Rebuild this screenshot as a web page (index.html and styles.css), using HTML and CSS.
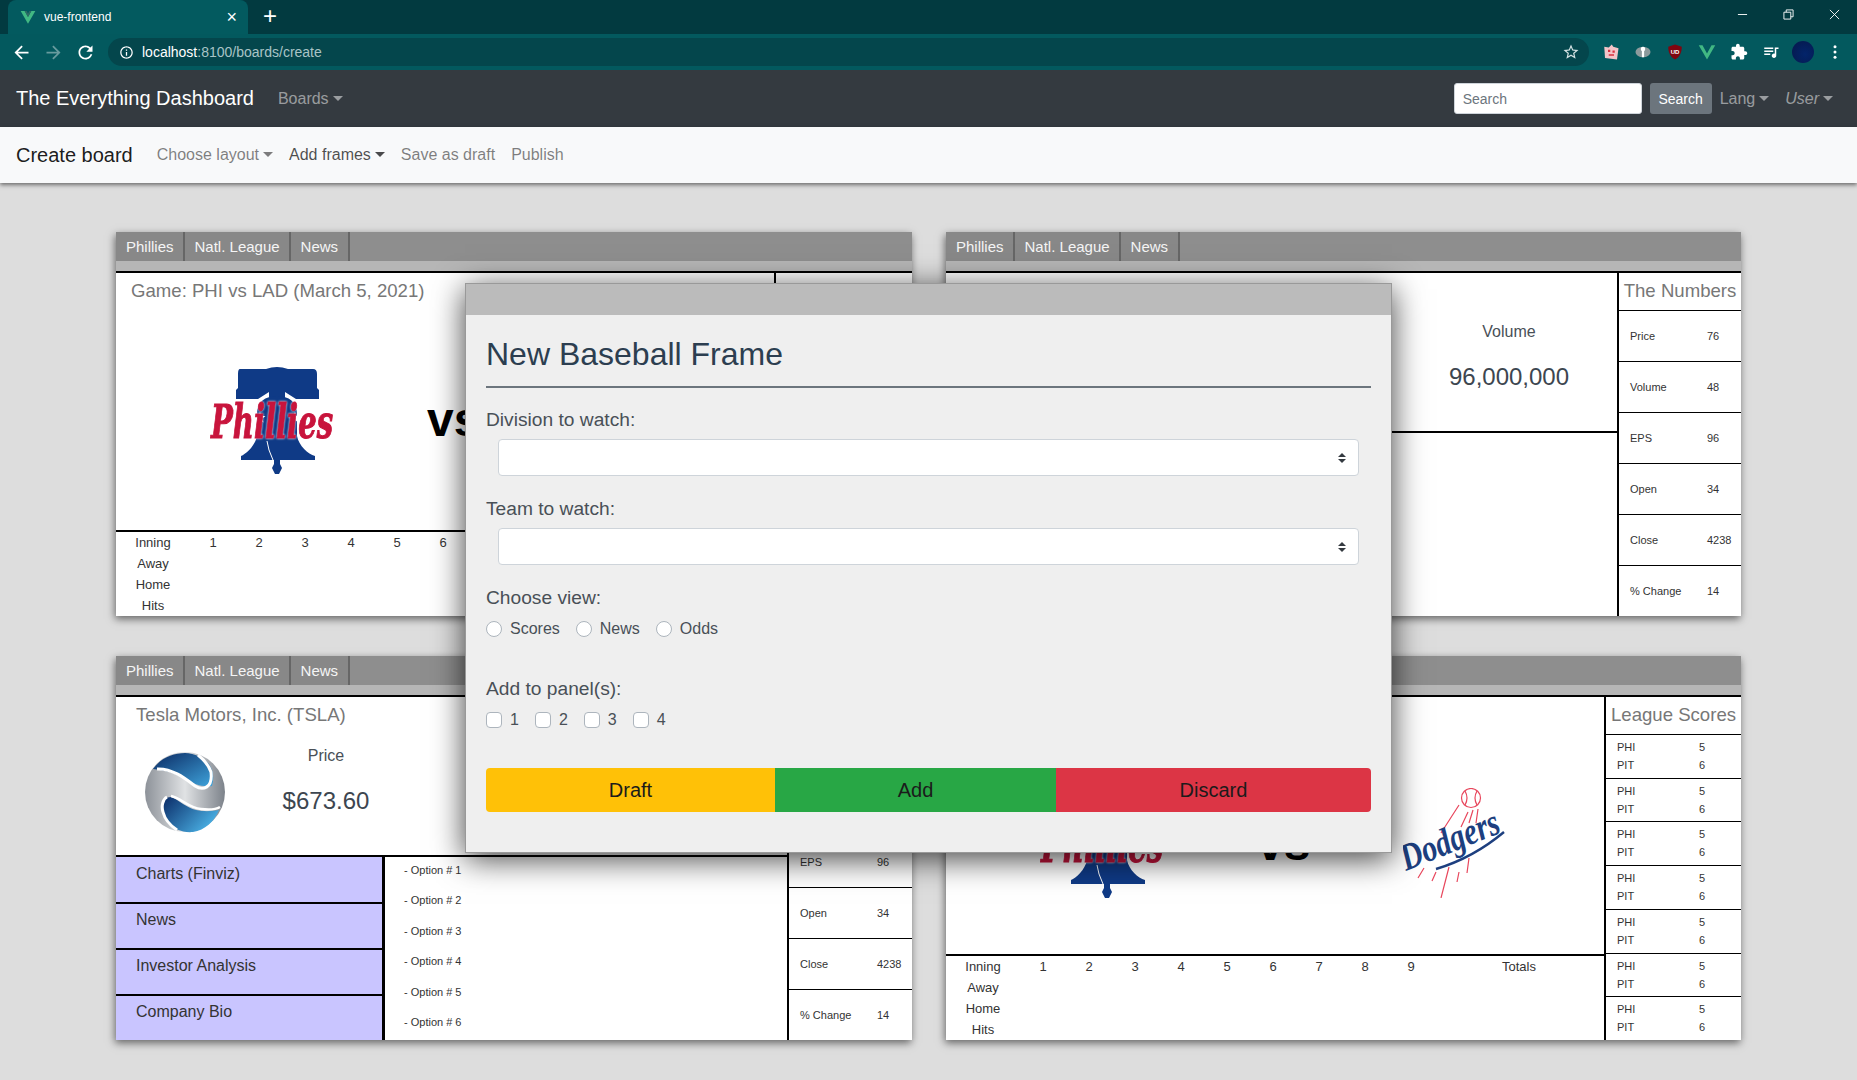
FILE: index.html
```html
<!DOCTYPE html>
<html>
<head>
    <meta charset="UTF-8">
    <meta name="viewport" content="width=device-width, initial-scale=1.0">
    <title>vue-frontend</title>
    <link rel="stylesheet" href="styles.css">
</head>

<body>

    <svg class="svg-defs">
        <defs>
            <linearGradient id="blue-top" x1="0" y1="0" x2="1" y2="1">
                <stop offset="0" stop-color="#0b2a63"/>
                <stop offset="1" stop-color="#3fa4dc"/>
            </linearGradient>
            <linearGradient id="blue-low" x1="0" y1="0" x2="1" y2="0.6">
                <stop offset="0" stop-color="#0a2a66"/>
                <stop offset="1" stop-color="#4ab0e4"/>
            </linearGradient>
            <linearGradient id="silver" x1="0" y1="0" x2="1" y2="0">
                <stop offset="0" stop-color="#8d9299"/>
                <stop offset="0.5" stop-color="#e0e2e4"/>
                <stop offset="1" stop-color="#7c828a"/>
            </linearGradient>
        </defs>
        <symbol id="logo-phillies" viewBox="0 0 124 110">
            <path fill="#0f3a86" d="M30 3H56Q67 -1 78 3H103Q107 3 107 8V22L109 24V33H86L75 26V33H59V26L48 33H26V24L28 22V8Q28 3 30 3Z"/>
            <path fill="#0f3a86" d="M67 30C55 30 47 36 47 48V70C45 80 36 88 31 90V94H105V90C98 88 89 80 87 70V48C87 36 79 30 67 30Z"/>
            <path fill="#0f3a86" d="M64 94H70V98L72 102L69 108H65L62 102L64 98Z"/>
            <path fill="none" stroke="#fff" stroke-width="1" d="M57 75L59 84L63 94"/>
            <path fill="#fff" d="M50 46L51.5 50H55.5L52.3 52.5L53.5 56.5L50 54L46.5 56.5L47.7 52.5L44.5 50H48.5Z"/>
            <path fill="#fff" d="M85 46L86.5 50H90.5L87.3 52.5L88.5 56.5L85 54L81.5 56.5L82.7 52.5L79.5 50H83.5Z"/>
            <text class="logo-phillies-text" x="1" y="72" font-size="46" fill="#c8143c" stroke="#c8143c" stroke-width="1.1" textLength="122" lengthAdjust="spacingAndGlyphs">Phillies</text>
        </symbol>
        <symbol id="logo-dodgers" viewBox="0 0 106 110">
            <g fill="none" stroke="#e8465c" stroke-width="1.2">
                <circle cx="68" cy="10" r="9.5"/>
                <path d="M62 3Q66 10 62 17M74 3Q70 10 74 17"/>
                <path d="M56 17L38 45M65 24L58 39M70 22L66 35M75 21L73 35M21 80L15 90M33 84L29 93M46 79L38 110M56 84L54 94M66 70L64 85"/>
            </g>
            <text class="logo-script" x="0" y="0" font-size="38" fill="#1d3f7f" transform="translate(3 83) rotate(-22)" textLength="104" lengthAdjust="spacingAndGlyphs">Dodgers</text>
            <path fill="none" stroke="#1d3f7f" stroke-width="2.4" d="M33 81Q70 70 101 44"/>
        </symbol>
        <symbol id="logo-tesla" viewBox="0 0 84 84">
            <circle cx="42" cy="42" r="40" fill="url(#silver)"/>
            <path fill="url(#blue-top)" d="M10 19C18 8 30 3 42 3C52 3 60 8 66 14C71 22 71 29 69 36C58 37 50 34 40 28C32 23 22 20 10 19Z"/>
            <path fill="url(#blue-low)" d="M20 55C20 50 23 47 28 47C36 50 44 58 53 60C62 62 70 61 76 60C71 72 62 80 50 82C40 83 30 79 25 72C21 67 20 60 20 55Z"/>
            <path fill="none" stroke="#fff" stroke-width="3" d="M14 19C30 18 44 30 52 36C60 41 70 38 68 22C66 16 60 9 55 5M24 47C20 49 18 56 20 62C22 70 28 76 34 80"/>
            <path fill="none" stroke="#fff" stroke-width="2.5" d="M28 46C38 48 46 58 58 59C66 60 72 60 77 57"/>
        </symbol>
    </svg>

    <div class="tab-strip">
        <div class="tab">
            <svg class="tab-icon" viewBox="0 0 24 24"><path fill="#41b883" d="M1 3H7L12 12L17 3H23L12 22Z"/><path fill="#2f6a66" d="M7 3H10L12 7L14 3H17L12 12Z"/></svg>
            <span class="tab-title">vue-frontend</span>
            <span class="tab-close">×</span>
        </div>
        <span class="tab-new">+</span>
        <div class="win-controls">
            <span class="win-btn"><svg viewBox="0 0 12 12"><path d="M1 6H11"/></svg></span>
            <span class="win-btn"><svg viewBox="0 0 12 12"><path d="M1 3.5H8.5V11H1ZM3.5 3.5V1H11V8.5H8.5"/></svg></span>
            <span class="win-btn"><svg viewBox="0 0 12 12"><path d="M1 1L11 11M11 1L1 11"/></svg></span>
        </div>
    </div>

    <div class="toolbar">
        <span class="tool-btn nav-icon"><svg viewBox="0 0 24 24"><path fill="#fff" d="M20 11H7.83l5.59-5.59L12 4l-8 8 8 8 1.41-1.41L7.83 13H20v-2z"/></svg></span>
        <span class="tool-btn nav-icon dim"><svg viewBox="0 0 24 24"><path fill="#fff" d="M12 4l-1.41 1.41L16.17 11H4v2h12.17l-5.58 5.59L12 20l8-8z"/></svg></span>
        <span class="tool-btn nav-icon"><svg viewBox="0 0 24 24"><path fill="#fff" d="M17.65 6.35C16.2 4.9 14.21 4 12 4c-4.42 0-7.99 3.58-7.99 8s3.57 8 7.99 8c3.73 0 6.84-2.55 7.73-6h-2.08c-.82 2.33-3.04 4-5.65 4-3.31 0-6-2.69-6-6s2.69-6 6-6c1.66 0 3.14.69 4.22 1.78L13 11h7V4l-2.35 2.35z"/></svg></span>
        <div class="omnibox">
            <svg class="omni-info" viewBox="0 0 24 24"><path fill="#fff" d="M11 7h2v2h-2zm0 4h2v6h-2zm1-9C6.48 2 2 6.48 2 12s4.48 10 10 10 10-4.48 10-10S17.52 2 12 2zm0 18c-4.41 0-8-3.59-8-8s3.59-8 8-8 8 3.59 8 8-3.59 8-8 8z"/></svg>
            <span class="omni-host">localhost</span><span class="omni-path">:8100/boards/create</span>
            <svg class="omni-star" viewBox="0 0 24 24"><path fill="#d5e3e4" d="M22 9.24l-7.19-.62L12 2 9.19 8.63 2 9.24l5.46 4.73L5.82 21 12 17.27 18.18 21l-1.63-7.03L22 9.24zM12 15.4l-3.76 2.27 1-4.28-3.32-2.88 4.38-.38L12 6.1l1.71 4.04 4.38.38-3.32 2.88 1 4.28L12 15.4z"/></svg>
        </div>
        <span class="tool-btn first-ext"><svg viewBox="0 0 24 24"><path fill="#f4c4c8" d="M3 5L9 6L13 2L15 5L22 7L20 22L4 20Z"/><path fill="#d8303f" d="M8 9H11V12H8ZM14 10H17V13H14ZM9 15H16V17H9Z"/></svg></span>
        <span class="tool-btn"><svg viewBox="0 0 24 24"><ellipse cx="12" cy="12" rx="10" ry="7" fill="#8c9a9c"/><circle cx="12" cy="8" r="3" fill="#fff"/><rect x="10.5" y="9" width="3" height="10" fill="#fff"/></svg></span>
        <span class="tool-btn"><svg viewBox="0 0 24 24"><path fill="#800510" d="M12 2L21 5C21 13 18 19 12 22C6 19 3 13 3 5Z"/><text class="ublock-text" x="12" y="14" text-anchor="middle">UD</text></svg></span>
        <span class="tool-btn"><svg viewBox="0 0 24 24"><path fill="#41b883" d="M1 3H6L12 14L18 3H23L12 22Z"/></svg></span>
        <span class="tool-btn"><svg viewBox="0 0 24 24"><path fill="#fff" d="M20.5 11H19V7c0-1.1-.9-2-2-2h-4V3.5C13 2.12 11.88 1 10.5 1S8 2.12 8 3.5V5H4c-1.1 0-1.99.9-1.99 2v3.8H3.5c1.49 0 2.7 1.21 2.7 2.7s-1.21 2.7-2.7 2.7H2V20c0 1.1.9 2 2 2h3.8v-1.5c0-1.49 1.21-2.7 2.7-2.7 1.49 0 2.7 1.21 2.7 2.7V22H17c1.1 0 2-.9 2-2v-4h1.5c1.38 0 2.5-1.12 2.5-2.5S21.88 11 20.5 11z"/></svg></span>
        <span class="tool-btn"><svg viewBox="0 0 24 24"><path fill="#fff" d="M15 6H3v2h12V6zm0 4H3v2h12v-2zM3 16h8v-2H3v2zM17 6v8.18c-.31-.11-.65-.18-1-.18-1.66 0-3 1.34-3 3s1.34 3 3 3 3-1.34 3-3V8h3V6h-5z"/></svg></span>
        <span class="tool-btn"><span class="avatar"></span></span>
        <span class="tool-btn"><svg viewBox="0 0 24 24"><circle cx="12" cy="5" r="2" fill="#fff"/><circle cx="12" cy="12" r="2" fill="#fff"/><circle cx="12" cy="19" r="2" fill="#fff"/></svg></span>
    </div>

    <div class="navbar">
        <span class="brand">The Everything Dashboard</span>
        <span class="nav-link caret">Boards</span>
        <div class="nav-right">
            <input class="search-input" type="text" placeholder="Search">
            <button class="search-btn">Search</button>
            <span class="nav-link caret">Lang</span>
            <span class="nav-link caret user">User</span>
        </div>
    </div>

    <div class="subnav">
        <span class="brand">Create board</span>
        <span class="sub-link caret">Choose layout</span>
        <span class="sub-link active caret">Add frames</span>
        <span class="sub-link">Save as draft</span>
        <span class="sub-link">Publish</span>
    </div>

    <div class="board">

        <!-- panel 1: game -->
        <div class="panel">
            <div class="panel-tabs">
                <span class="panel-tab">Phillies</span>
                <span class="panel-tab">Natl. League</span>
                <span class="panel-tab">News</span>
            </div>
            <div class="panel-strip"></div>
            <div class="panel-body">
                <div class="game">
                    <div class="game-hero">
                        <div class="game-title">Game: PHI vs LAD (March 5, 2021)</div>
                        <div class="matchup">
                            <svg class="phillies"><use href="#logo-phillies"/></svg>
                            <span class="versus">vs</span>
                            <svg class="dodgers"><use href="#logo-dodgers"/></svg>
                        </div>
                    </div>
                    <div class="innings">
                        <span class="inning-name">Inning</span><span>1</span><span>2</span><span>3</span><span>4</span><span>5</span><span>6</span><span>7</span><span>8</span><span>9</span><span>Totals</span>
                        <span class="inning-name">Away</span>
                        <span class="inning-name">Home</span>
                        <span class="inning-name">Hits</span>
                    </div>
                </div>
                <div class="scores">
                    <div class="side-title">League Scores</div>
                    <div class="score-row"><div><span>PHI</span><span>5</span></div><div><span>PIT</span><span>6</span></div></div>
                    <div class="score-row"><div><span>PHI</span><span>5</span></div><div><span>PIT</span><span>6</span></div></div>
                    <div class="score-row"><div><span>PHI</span><span>5</span></div><div><span>PIT</span><span>6</span></div></div>
                    <div class="score-row"><div><span>PHI</span><span>5</span></div><div><span>PIT</span><span>6</span></div></div>
                    <div class="score-row"><div><span>PHI</span><span>5</span></div><div><span>PIT</span><span>6</span></div></div>
                    <div class="score-row"><div><span>PHI</span><span>5</span></div><div><span>PIT</span><span>6</span></div></div>
                    <div class="score-row"><div><span>PHI</span><span>5</span></div><div><span>PIT</span><span>6</span></div></div>
                </div>
            </div>
        </div>

        <!-- panel 2: stock -->
        <div class="panel">
            <div class="panel-tabs">
                <span class="panel-tab">Phillies</span>
                <span class="panel-tab">Natl. League</span>
                <span class="panel-tab">News</span>
            </div>
            <div class="panel-strip"></div>
            <div class="panel-body">
                <div class="stock">
                    <div class="stock-top">
                        <div class="stock-title">Tesla Motors, Inc. (TSLA)</div>
                        <div class="stock-stats">
                            <svg class="tesla"><use href="#logo-tesla"/></svg>
                            <div class="stat stat-price">
                                <div class="stat-label">Price</div>
                                <div class="stat-value">$673.60</div>
                            </div>
                            <div class="stat stat-volume">
                                <div class="stat-label">Volume</div>
                                <div class="stat-value">96,000,000</div>
                            </div>
                        </div>
                    </div>
                    <div class="stock-bottom"></div>
                </div>
                <div class="numbers">
                    <div class="side-title">The Numbers</div>
                    <div class="number-row"><span>Price</span><span>76</span></div>
                    <div class="number-row"><span>Volume</span><span>48</span></div>
                    <div class="number-row"><span>EPS</span><span>96</span></div>
                    <div class="number-row"><span>Open</span><span>34</span></div>
                    <div class="number-row"><span>Close</span><span>4238</span></div>
                    <div class="number-row"><span>% Change</span><span>14</span></div>
                </div>
            </div>
        </div>

        <!-- panel 3: stock with menu -->
        <div class="panel">
            <div class="panel-tabs">
                <span class="panel-tab">Phillies</span>
                <span class="panel-tab">Natl. League</span>
                <span class="panel-tab">News</span>
            </div>
            <div class="panel-strip"></div>
            <div class="panel-body">
                <div class="stock">
                    <div class="stock-top">
                        <div class="stock-title">Tesla Motors, Inc. (TSLA)</div>
                        <div class="stock-stats">
                            <svg class="tesla"><use href="#logo-tesla"/></svg>
                            <div class="stat stat-price">
                                <div class="stat-label">Price</div>
                                <div class="stat-value">$673.60</div>
                            </div>
                            <div class="stat stat-volume">
                                <div class="stat-label">Volume</div>
                                <div class="stat-value">96,000,000</div>
                            </div>
                        </div>
                    </div>
                    <div class="stock-bottom">
                        <div class="stock-menu">
                            <div class="menu-row">Charts (Finviz)</div>
                            <div class="menu-row">News</div>
                            <div class="menu-row">Investor Analysis</div>
                            <div class="menu-row">Company Bio</div>
                        </div>
                        <div class="stock-options">
                            <div>- Option # 1</div>
                            <div>- Option # 2</div>
                            <div>- Option # 3</div>
                            <div>- Option # 4</div>
                            <div>- Option # 5</div>
                            <div>- Option # 6</div>
                        </div>
                    </div>
                </div>
                <div class="numbers">
                    <div class="side-title">The Numbers</div>
                    <div class="number-row"><span>Price</span><span>76</span></div>
                    <div class="number-row"><span>Volume</span><span>48</span></div>
                    <div class="number-row"><span>EPS</span><span>96</span></div>
                    <div class="number-row"><span>Open</span><span>34</span></div>
                    <div class="number-row"><span>Close</span><span>4238</span></div>
                    <div class="number-row"><span>% Change</span><span>14</span></div>
                </div>
            </div>
        </div>

        <!-- panel 4: game -->
        <div class="panel">
            <div class="panel-tabs">
                <span class="panel-tab">Phillies</span>
                <span class="panel-tab">Natl. League</span>
                <span class="panel-tab">News</span>
            </div>
            <div class="panel-strip"></div>
            <div class="panel-body">
                <div class="game">
                    <div class="game-hero">
                        <div class="game-title">Game: PHI vs LAD (March 5, 2021)</div>
                        <div class="matchup">
                            <svg class="phillies"><use href="#logo-phillies"/></svg>
                            <span class="versus">vs</span>
                            <svg class="dodgers"><use href="#logo-dodgers"/></svg>
                        </div>
                    </div>
                    <div class="innings">
                        <span class="inning-name">Inning</span><span>1</span><span>2</span><span>3</span><span>4</span><span>5</span><span>6</span><span>7</span><span>8</span><span>9</span><span>Totals</span>
                        <span class="inning-name">Away</span>
                        <span class="inning-name">Home</span>
                        <span class="inning-name">Hits</span>
                    </div>
                </div>
                <div class="scores">
                    <div class="side-title">League Scores</div>
                    <div class="score-row"><div><span>PHI</span><span>5</span></div><div><span>PIT</span><span>6</span></div></div>
                    <div class="score-row"><div><span>PHI</span><span>5</span></div><div><span>PIT</span><span>6</span></div></div>
                    <div class="score-row"><div><span>PHI</span><span>5</span></div><div><span>PIT</span><span>6</span></div></div>
                    <div class="score-row"><div><span>PHI</span><span>5</span></div><div><span>PIT</span><span>6</span></div></div>
                    <div class="score-row"><div><span>PHI</span><span>5</span></div><div><span>PIT</span><span>6</span></div></div>
                    <div class="score-row"><div><span>PHI</span><span>5</span></div><div><span>PIT</span><span>6</span></div></div>
                    <div class="score-row"><div><span>PHI</span><span>5</span></div><div><span>PIT</span><span>6</span></div></div>
                </div>
            </div>
        </div>

    </div>

    <!-- New frame dialog -->
    <div class="modal">
        <div class="modal-head"></div>
        <div class="modal-body">
            <h2 class="modal-title">New Baseball Frame</h2>
            <div class="modal-rule"></div>

            <label class="field-label first">Division to watch:</label>
            <select class="field-select"></select>

            <label class="field-label">Team to watch:</label>
            <select class="field-select"></select>

            <label class="field-label">Choose view:</label>
            <div class="choice-row radios">
                <label class="choice"><input type="radio" name="view"><span>Scores</span></label>
                <label class="choice"><input type="radio" name="view"><span>News</span></label>
                <label class="choice"><input type="radio" name="view"><span>Odds</span></label>
            </div>

            <label class="field-label spaced">Add to panel(s):</label>
            <div class="choice-row checks">
                <label class="choice"><input type="checkbox"><span>1</span></label>
                <label class="choice"><input type="checkbox"><span>2</span></label>
                <label class="choice"><input type="checkbox"><span>3</span></label>
                <label class="choice"><input type="checkbox"><span>4</span></label>
            </div>

            <div class="modal-actions">
                <button class="action draft">Draft</button>
                <button class="action add">Add</button>
                <button class="action discard">Discard</button>
            </div>
        </div>
    </div>

</body>

</html>
```

FILE: styles.css
```css
body {
    font-family: "Liberation Sans", Arial, sans-serif;
    margin: 0;
    padding: 0;
    background-color: #dddddd;
    color: #212529;
}

.svg-defs {
    position: absolute;
    width: 0;
    height: 0;
}

.logo-script {
    font-family: "Liberation Serif", serif;
    font-weight: bold;
    font-style: italic;
}

.logo-phillies-text {
    font-family: "DejaVu Serif", "Liberation Serif", serif;
    font-weight: bold;
    font-style: italic;
    filter: drop-shadow(0 0 1px #fff);
}

/* browser chrome */
.tab-strip {
    height: 34px;
    background-color: #023a40;
    display: flex;
    align-items: stretch;
    padding-left: 8px;
    color: #fff;
}

.tab {
    width: 240px;
    background-color: #035a5f;
    border-radius: 8px 8px 0 0;
    display: flex;
    align-items: center;
    box-sizing: border-box;
    padding: 0 11px 0 12px;
}

.tab-icon {
    width: 16px;
    height: 16px;
    margin-right: 8px;
}

.tab-title {
    font-size: 12px;
    flex-grow: 1;
}

.tab-close {
    font-size: 18px;
    line-height: 18px;
}

.tab-new {
    font-size: 24px;
    line-height: 31px;
    margin-left: 15px;
}

.win-controls {
    margin-left: auto;
    display: flex;
}

.win-btn {
    width: 46px;
    display: flex;
    align-items: center;
    justify-content: center;
    padding-bottom: 6px;
}

.win-btn svg {
    width: 11px;
    height: 11px;
    fill: none;
    stroke: #fff;
    stroke-width: 1;
}

.toolbar {
    height: 36px;
    background-color: #03595e;
    display: flex;
    align-items: center;
    padding: 0 6px 0 5px;
}

.tool-btn {
    width: 32px;
    height: 32px;
    display: flex;
    align-items: center;
    justify-content: center;
    flex-shrink: 0;
}

.tool-btn svg {
    width: 18px;
    height: 18px;
}

.tool-btn.nav-icon svg {
    width: 21px;
    height: 21px;
}

.tool-btn.dim {
    opacity: 0.4;
}

.first-ext {
    margin-left: 6px;
}

.ublock-text {
    font-size: 8px;
    font-weight: bold;
    fill: #fff;
}

.avatar {
    width: 22px;
    height: 22px;
    border-radius: 50%;
    background: radial-gradient(circle at 60% 60%, #03246a, #06184a);
}

.omnibox {
    flex-grow: 1;
    height: 28px;
    margin-left: 7px;
    background-color: #04464c;
    border-radius: 14px;
    display: flex;
    align-items: center;
    padding-left: 11px;
    font-size: 14px;
}

.omni-info {
    width: 15px;
    height: 15px;
    margin-right: 8px;
}

.omni-host {
    color: #fff;
}

.omni-path {
    color: #a9c4c6;
}

.omni-star {
    width: 18px;
    height: 18px;
    margin-left: auto;
    margin-right: 9px;
}

/* app navbars */
.navbar {
    height: 57px;
    background-color: #343a40;
    display: flex;
    align-items: center;
    padding: 0 16px;
}

.brand {
    font-size: 20px;
    margin-right: 16px;
}

.navbar .brand {
    color: #fff;
}

.nav-link {
    font-size: 16px;
    padding: 0 8px;
    color: rgba(255, 255, 255, 0.5);
}

.caret::after {
    content: "";
    display: inline-block;
    margin-left: 4px;
    vertical-align: 3px;
    border-top: 5px solid;
    border-left: 5px solid transparent;
    border-right: 5px solid transparent;
}

.user {
    font-style: italic;
}

.nav-right {
    margin-left: auto;
    display: flex;
    align-items: center;
}

.search-input {
    width: 188px;
    height: 31px;
    box-sizing: border-box;
    border: 1px solid #ced4da;
    border-radius: 3px;
    padding: 0 8px;
    font-family: inherit;
    font-size: 14px;
    margin-right: 8px;
}

.search-input::placeholder {
    color: #6c757d;
}

.search-btn {
    width: 62px;
    height: 31px;
    border: none;
    border-radius: 3px;
    background-color: #6c757d;
    color: #fff;
    font-family: inherit;
    font-size: 14px;
    padding: 0;
}

.subnav {
    height: 56px;
    background-color: #f8f9fa;
    display: flex;
    align-items: center;
    padding: 0 16px;
    box-shadow: 0 2px 4px rgba(0, 0, 0, 0.5);
    position: relative;
}

.subnav .brand {
    color: rgba(0, 0, 0, 0.9);
}

.sub-link {
    font-size: 16px;
    padding: 0 8px;
    color: rgba(0, 0, 0, 0.5);
}

.sub-link.active {
    color: rgba(0, 0, 0, 0.7);
}

/* board */
.board {
    display: grid;
    grid-template-columns: 796px 795px;
    grid-template-rows: 384px 384px;
    column-gap: 34px;
    row-gap: 40px;
    padding: 49px 0 40px 116px;
}

.panel {
    display: flex;
    flex-direction: column;
    box-shadow: -1px 3px 8px rgba(0, 0, 0, 0.55);
    background-color: #fff;
}

.panel-tabs {
    height: 29px;
    background-color: #8e8e8e;
    display: flex;
}

.panel-tab {
    padding: 0 9px 0 10px;
    font-size: 15px;
    line-height: 29px;
    color: #f5f5f5;
    border-right: 2px solid #666;
    background-color: #888;
}

.panel-tab:last-child {
    padding-right: 10px;
}

.panel-strip {
    height: 10px;
    background-color: #b6b6b6;
}

.panel-body {
    flex-grow: 1;
    border-top: 2px solid #000;
    display: flex;
    min-height: 0;
}

.side-title {
    height: 37px;
    line-height: 36px;
    font-size: 18.6px;
    color: #777;
    text-align: center;
    white-space: nowrap;
    flex-shrink: 0;
}

/* game frame */
.game {
    width: 658px;
    display: flex;
    flex-direction: column;
    flex-shrink: 0;
}

.game-hero {
    height: 257px;
    border-bottom: 2px solid #000;
    flex-shrink: 0;
}

.game-title {
    font-size: 18.6px;
    line-height: 24px;
    color: #777;
    padding: 6px 15px;
}

.matchup {
    display: flex;
    align-items: flex-start;
    padding-left: 94px;
    gap: 93px;
}

.phillies {
    width: 124px;
    height: 110px;
    margin-top: 57px;
}

.dodgers {
    width: 106px;
    height: 110px;
    margin-top: 55px;
}

.versus {
    font-size: 48px;
    font-weight: bold;
    color: #000;
    line-height: 48px;
    margin-top: 87px;
}

.innings {
    display: grid;
    grid-template-columns: 74px repeat(9, 46px) 170px;
    grid-auto-rows: 21px;
    font-size: 13px;
    line-height: 21px;
    text-align: center;
    color: #333;
}

.inning-name {
    grid-column: 1;
}

.scores {
    flex-grow: 1;
    border-left: 2px solid #000;
    display: flex;
    flex-direction: column;
}

.score-row {
    flex: 1;
    border-top: 1px solid #000;
    padding-top: 3px;
    font-size: 11px;
    line-height: 18px;
    color: #333;
}

.score-row div {
    display: flex;
    padding-left: 11px;
}

.score-row span:first-child {
    width: 82px;
}

/* stock frame */
.stock {
    width: 671px;
    flex-shrink: 0;
    display: flex;
    flex-direction: column;
}

.stock-top {
    height: 158px;
    border-bottom: 2px solid #000;
    flex-shrink: 0;
}

.stock-title {
    font-size: 18.6px;
    line-height: 24px;
    color: #777;
    padding: 6px 20px;
}

.stock-stats {
    display: flex;
    padding-left: 27px;
}

.tesla {
    width: 84px;
    height: 84px;
    margin-top: 17px;
    flex-shrink: 0;
}

.stat {
    width: 198px;
    text-align: center;
    padding-top: 11px;
    color: #495057;
}

.stat-volume {
    margin-left: 155px;
}

.stat-label {
    font-size: 16px;
    line-height: 24px;
}

.stat-value {
    font-size: 24px;
    line-height: 29px;
    margin-top: 18px;
    color: #3d4650;
}

.stock-bottom {
    flex-grow: 1;
    display: flex;
    min-height: 0;
}

.stock-menu {
    width: 266px;
    flex-shrink: 0;
    background-color: #c9c5ff;
    border-right: 3px solid #000;
    display: flex;
    flex-direction: column;
}

.menu-row {
    flex: 1;
    font-size: 16px;
    line-height: 24px;
    padding: 4px 20px 0;
    color: #333;
    border-top: 2px solid #000;
}

.menu-row:first-child {
    border-top: none;
    padding-top: 5px;
}

.stock-options {
    padding: 5px 0 0 19px;
    font-size: 11px;
    line-height: 16px;
    color: #333;
}

.stock-options div {
    height: 30.4px;
}

.stock-options div:last-child {
    height: 16px;
}

.numbers {
    flex-grow: 1;
    border-left: 2px solid #000;
    display: flex;
    flex-direction: column;
}

.number-row {
    flex: 1;
    display: flex;
    align-items: center;
    border-top: 1px solid #000;
    font-size: 11px;
    padding-left: 11px;
    color: #333;
}

.number-row span:first-child {
    width: 77px;
}

/* modal */
.modal {
    position: absolute;
    left: 465px;
    top: 283px;
    width: 927px;
    height: 570px;
    box-sizing: border-box;
    border: 1px solid #999;
    background-color: #efefef;
    box-shadow: 0 6px 30px rgba(0, 0, 0, 0.75);
}

.modal-head {
    height: 31px;
    background-color: #bbbbbb;
}

.modal-body {
    padding: 20px 20px 0;
    color: #495057;
}

.modal-title {
    font-size: 32px;
    font-weight: normal;
    line-height: 38px;
    margin: 0;
    color: #2c3e50;
}

.modal-rule {
    height: 2px;
    background-color: #6c757d;
    margin-top: 13px;
}

.field-label {
    display: block;
    font-size: 19.2px;
    line-height: 24px;
    margin-top: 21px;
}

.field-label.first {
    margin-top: 20px;
}

.field-label.spaced {
    margin-top: 36px;
}

.field-select {
    display: block;
    width: 861px;
    height: 37px;
    margin: 7px 0 0 12px;
    appearance: none;
    background-color: #fff;
    background-image: url("data:image/svg+xml,%3csvg xmlns='http://www.w3.org/2000/svg' width='8' height='10' viewBox='0 0 4 5'%3e%3cpath fill='%23343a40' d='M2 0L0 2h4zm0 5L0 3h4z'/%3e%3c/svg%3e");
    background-repeat: no-repeat;
    background-position: right 12px center;
    border: 1px solid #ced4da;
    border-radius: 4px;
}

.choice-row {
    display: flex;
    gap: 16px;
    font-size: 16px;
    line-height: 24px;
}

.radios {
    margin-top: 7px;
}

.checks {
    margin-top: 7px;
}

.choice {
    display: flex;
    align-items: center;
    gap: 8px;
}

.choice input {
    appearance: none;
    width: 16px;
    height: 16px;
    margin: 0;
    background-color: #fff;
    border: 1px solid #adb5bd;
}

.choice input[type="radio"] {
    border-radius: 50%;
}

.choice input[type="checkbox"] {
    border-radius: 4px;
}

.modal-actions {
    display: grid;
    grid-template-columns: 289px 281px 315px;
    margin-top: 36px;
}

.action {
    height: 44px;
    border: none;
    padding: 0;
    font-family: inherit;
    font-size: 20px;
    color: #1b1b1b;
}

.draft {
    background-color: #ffc107;
    border-radius: 4px 0 0 4px;
}

.add {
    background-color: #28a745;
}

.discard {
    background-color: #dc3545;
    border-radius: 0 4px 4px 0;
}
```
